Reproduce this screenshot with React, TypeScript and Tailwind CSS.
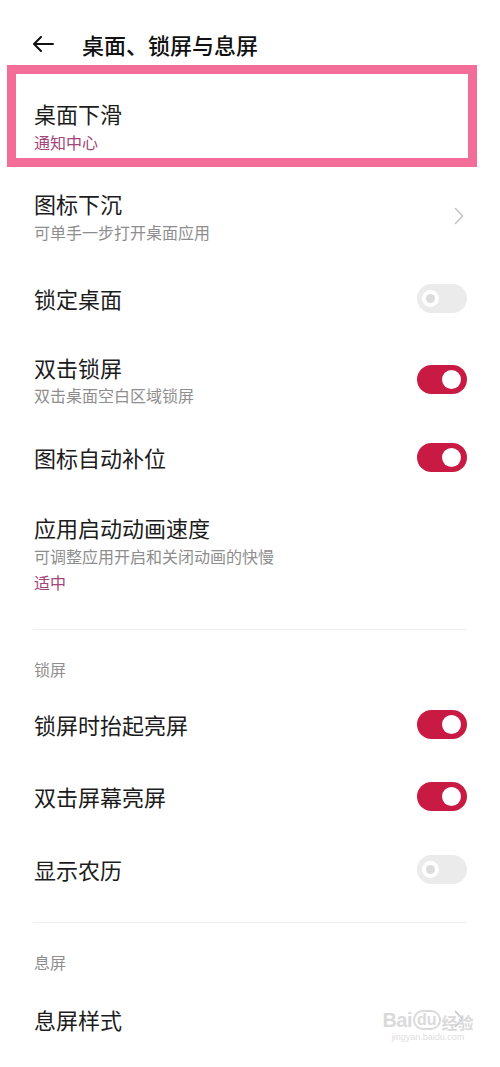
import React from "react";

const font = { fontFamily: '"Noto Sans CJK SC", "Noto Sans", sans-serif' };

function ToggleOn() {
  return (
    <div className="w-[50px] h-[29px] rounded-full bg-[#c81a42] flex items-center justify-end pr-[6px] shrink-0">
      <div className="w-[19px] h-[19px] rounded-full bg-white" />
    </div>
  );
}

function ToggleOff() {
  return (
    <div className="w-[50px] h-[29px] rounded-full bg-[#ebebeb] flex items-center pl-[5px] shrink-0">
      <div className="w-[17px] h-[17px] rounded-full bg-white flex items-center justify-center">
        <div className="w-[9px] h-[9px] rounded-full bg-[#dcdcdc]" />
      </div>
    </div>
  );
}

function Chevron() {
  return (
    <svg width="10" height="18" viewBox="0 0 10 18" className="shrink-0 mr-[3px]">
      <path d="M1.5 1.5 L8.5 9 L1.5 16.5" fill="none" stroke="#c4c4c4" strokeWidth="1.6" strokeLinecap="round" strokeLinejoin="round" />
    </svg>
  );
}

function Title({ children }: { children: React.ReactNode }) {
  return <div className="text-[22px] leading-[28px] text-[#1c1c1c]">{children}</div>;
}

function Sub({ children, accent }: { children: React.ReactNode; accent?: boolean }) {
  return (
    <div className={accent ? "text-[16px] leading-[22px] text-[#a3457a]" : "text-[16px] leading-[22px] text-[#8e8e8e]"}>
      {children}
    </div>
  );
}

export default function App() {
  return (
    <div className="w-[500px] h-[1067px] bg-white relative overflow-hidden" style={font}>
      {/* header */}
      <div className="pt-[24px] h-[65px]">
        <div className="h-[40px] flex items-center pl-[32px]">
          <svg width="22" height="16" viewBox="0 0 22 16" className="shrink-0">
            <path d="M2 8 H21 M9 1 L2 8 L9 15" fill="none" stroke="#111" strokeWidth="2" strokeLinecap="round" strokeLinejoin="round" />
          </svg>
          <div className="ml-[28px] text-[22px] leading-[28px] font-medium text-[#111]">桌面、锁屏与息屏</div>
        </div>
      </div>

      {/* highlighted row */}
      <div className="ml-[7px] w-[470px] h-[102px] border-[9px] border-[#f26e98] pl-[18px] pt-[25px]">
        <Title>桌面下滑</Title>
        <div className="mt-[4px]">
          <Sub accent>通知中心</Sub>
        </div>
      </div>

      <div className="px-[33px]">
        <div className="mt-[22px] flex items-center justify-between pl-[1px]">
          <div>
            <Title>图标下沉</Title>
            <div className="mt-[4px]"><Sub>可单手一步打开桌面应用</Sub></div>
          </div>
          <Chevron />
        </div>

        <div className="mt-[41px] h-[28px] flex items-center justify-between pl-[1px]">
          <Title>锁定桌面</Title>
          <ToggleOff />
        </div>

        <div className="mt-[41px] flex items-center justify-between pl-[1px]">
          <div>
            <Title>双击锁屏</Title>
            <div className="mt-[3px]"><Sub>双击桌面空白区域锁屏</Sub></div>
          </div>
          <ToggleOn />
        </div>

        <div className="mt-[37px] h-[28px] flex items-center justify-between pl-[1px]">
          <Title>图标自动补位</Title>
          <ToggleOn />
        </div>

        <div className="mt-[42px] pl-[1px]">
          <Title>应用启动动画速度</Title>
          <div className="mt-[4px]"><Sub>可调整应用开启和关闭动画的快慢</Sub></div>
          <div className="mt-[4px]"><Sub accent>适中</Sub></div>
        </div>

        <div className="mt-[36px] h-px bg-[#efefef]" />

        <div className="mt-[28px] pl-[1px] text-[16px] leading-[22px] text-[#8e8e8e]">锁屏</div>

        <div className="mt-[30px] h-[28px] flex items-center justify-between pl-[1px]">
          <Title>锁屏时抬起亮屏</Title>
          <ToggleOn />
        </div>

        <div className="mt-[44px] h-[28px] flex items-center justify-between pl-[1px]">
          <Title>双击屏幕亮屏</Title>
          <ToggleOn />
        </div>

        <div className="mt-[45px] h-[28px] flex items-center justify-between pl-[1px]">
          <Title>显示农历</Title>
          <ToggleOff />
        </div>

        <div className="mt-[39px] h-px bg-[#efefef]" />

        <div className="mt-[28px] pl-[1px] text-[16px] leading-[22px] text-[#8e8e8e]">息屏</div>

        <div className="mt-[32px] h-[28px] flex items-center justify-between pl-[1px]">
          <Title>息屏样式</Title>
          <Chevron />
        </div>
      </div>

      {/* watermark */}
      <div className="absolute left-[380px] top-[1010px] w-[96px] flex flex-col items-center pointer-events-none" style={{ fontFamily: '"Liberation Sans", "Noto Sans CJK SC", sans-serif' }}>
        <div className="flex items-end gap-[1px] text-[#dadada] leading-none whitespace-nowrap">
          <span className="text-[20px] font-bold tracking-tight">Bai</span>
          <span className="text-[16px] font-bold border-[2px] border-[#dadada] rounded-full px-[2px]">du</span>
          <span className="text-[16px] font-bold" style={font}>经验</span>
        </div>
        <div className="text-[9px] text-[#dedede] mt-[3px] leading-none whitespace-nowrap">jingyan.baidu.com</div>
      </div>
    </div>
  );
}
